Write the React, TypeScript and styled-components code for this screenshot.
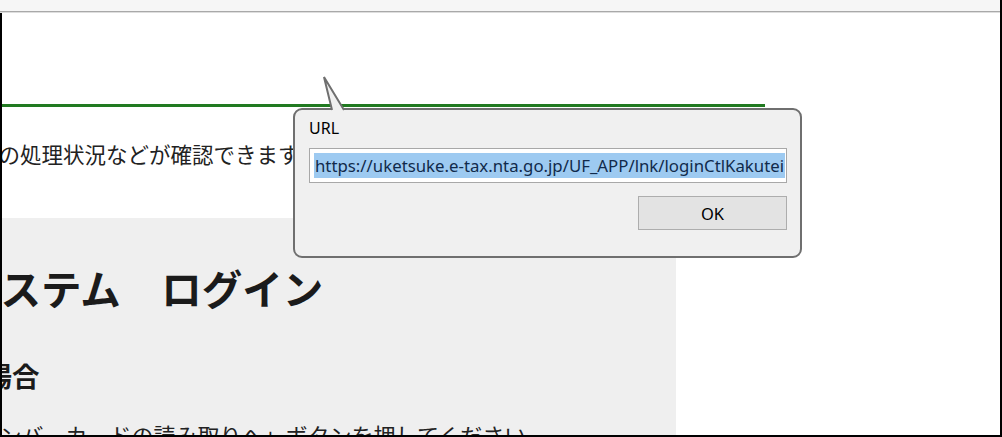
import styled, { createGlobalStyle } from "styled-components";

const GlobalStyle = createGlobalStyle`
  html, body {
    margin: 0;
    padding: 0;
    background: #fff;
  }
  body {
    font-family: "Noto Sans CJK JP", "Noto Sans", sans-serif;
  }
`;

const Frame = styled.div`
  width: 1000px;
  height: 435px;
  display: flex;
  flex-direction: column;
  border-right: 2px solid #000;
  border-bottom: 2px solid #000;
  overflow: hidden;
  background: #fff;
`;

const TopBar = styled.div`
  height: 11px;
  flex-shrink: 0;
  background: #f6f6f6;
  border-bottom: 1px solid #a9a9a9;
  box-shadow: 0 1px 0 #dedede;
`;

const Viewport = styled.div`
  flex: 1;
  position: relative;
  overflow: hidden;
  margin-top: 1px;
  border-left: 2px solid #000;
  font-family: "Noto Sans CJK JP", sans-serif;
  color: #222;
`;

const GreenRule = styled.div`
  width: 763px;
  height: 3px;
  margin-top: 91px;
  background: #217a21;
`;

const Lead = styled.p<{ $shift: number }>`
  margin: 31px 0 48px ${(p) => p.$shift}px;
  font-size: 21.5px;
  line-height: 32px;
  white-space: nowrap;
`;

const LoginPanel = styled.section`
  width: 674px;
  height: 300px;
  padding-top: 46px;
  background: #efefef;
  overflow: hidden;
`;

const Title = styled.h1<{ $shift: number }>`
  margin: 0 0 46px ${(p) => p.$shift}px;
  font-size: 40.5px;
  line-height: 48px;
  font-weight: 700;
  color: #1b1b1b;
  white-space: nowrap;
`;

const SubTitle = styled.h2<{ $shift: number }>`
  margin: 0 0 26px ${(p) => p.$shift}px;
  font-size: 27.5px;
  line-height: 34px;
  font-weight: 700;
  color: #1b1b1b;
  white-space: nowrap;
`;

const Body = styled.p<{ $shift: number }>`
  margin: 0 0 0 ${(p) => p.$shift}px;
  font-size: 22px;
  line-height: 33px;
  white-space: nowrap;
`;

const Dialog = styled.div`
  position: absolute;
  left: 291px;
  top: 95px;
  width: 478px;
  height: 146px;
  padding: 0 13px 0 14px;
  display: flex;
  flex-direction: column;
  background: #f0f0f0;
  border: 2px solid #6f6f6f;
  border-radius: 9px;
  font-family: "Noto Sans", sans-serif;
  color: #000;
`;

const Tail = styled.svg`
  position: absolute;
  left: 20px;
  top: -33px;
  width: 40px;
  height: 36px;
  overflow: visible;
`;

const Label = styled.div`
  margin-top: 8px;
  font-size: 16px;
  line-height: 21px;
`;

const Field = styled.div`
  margin-top: 9px;
  height: 25px;
  padding: 4px;
  background: #fff;
  border: 1px solid #a8a8a8;
  display: flex;
  overflow: hidden;
`;

const Selected = styled.span`
  background: #9dcaf1;
  color: #112a4b;
  font-size: 16.8px;
  line-height: 25px;
  white-space: nowrap;
  padding: 0 1px;
`;

const Actions = styled.div`
  margin-top: 13px;
  display: flex;
  justify-content: flex-end;
`;

const Button = styled.button`
  width: 149px;
  height: 34px;
  background: #e3e3e3;
  border: 1px solid #adadad;
  font-family: "Noto Sans", sans-serif;
  font-size: 16.5px;
  color: #000;
  padding: 0;
`;

export default function App() {
  return (
    <>
      <GlobalStyle />
      <Frame>
        <TopBar />
        <Viewport>
          <GreenRule />
          <Lead $shift={-25}>等の処理状況などが確認できます。</Lead>
          <LoginPanel>
            <Title $shift={-42}>システム　ログイン</Title>
            <SubTitle $shift={-45}>の場合</SubTitle>
            <Body $shift={-90}>「マイナンバーカードの読み取りへ」ボタンを押してください。</Body>
          </LoginPanel>
          <Dialog>
            <Tail viewBox="0 0 40 36">
              <polygon points="9,0 17,34 29,34" fill="#f0f0f0" />
              <polyline
                points="17,33 9,0 29,33"
                fill="none"
                stroke="#6f6f6f"
                strokeWidth="2"
                strokeLinejoin="miter"
              />
            </Tail>
            <Label>URL</Label>
            <Field>
              <Selected>https://uketsuke.e-tax.nta.go.jp/UF_APP/lnk/loginCtlKakutei</Selected>
            </Field>
            <Actions>
              <Button type="button">OK</Button>
            </Actions>
          </Dialog>
        </Viewport>
      </Frame>
    </>
  );
}
